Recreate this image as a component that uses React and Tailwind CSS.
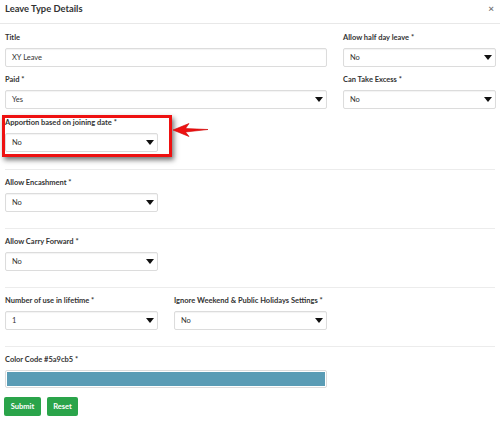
import React from 'react';

const font = { fontFamily: 'Lato, "Open Sans", Arial, sans-serif' };

function Label({ children }) {
  return (
    <div className="h-[12px] mb-[4px] text-[7.5px] leading-[12px] font-bold text-[#333] whitespace-nowrap">
      {children}
    </div>
  );
}

function TextInput({ value }) {
  return (
    <div className="h-[19px] border border-[#dcdcdc] rounded-[2px] bg-white flex items-center px-[6px] text-[7.5px] text-[#333] shadow-[inset_0_1px_1px_rgba(0,0,0,0.05)]">
      {value}
    </div>
  );
}

function Select({ value }) {
  return (
    <div className="h-[19px] border border-[#dcdcdc] rounded-[2px] bg-white flex items-center justify-between pl-[6px] pr-[3px] text-[7.5px] text-[#333] shadow-[inset_0_1px_1px_rgba(0,0,0,0.05)]">
      <span>{value}</span>
      <svg width="8" height="5" viewBox="0 0 8 5" className="mb-[1px]">
        <polygon points="0,0 8,0 4,5" fill="#111" />
      </svg>
    </div>
  );
}

function Field({ label, children, className = '' }) {
  return (
    <div className={className}>
      <Label>{label}</Label>
      {children}
    </div>
  );
}

function Section({ children }) {
  return (
    <div className="border-t border-[#ececec] pt-[7px] pb-[16px]">
      <div className="grid grid-cols-[153px_153px_153px] gap-x-[16px]">{children}</div>
    </div>
  );
}

export default function App() {
  return (
    <div className="relative w-[500px] h-[423px] bg-white overflow-hidden text-[#333]" style={font}>
      {/* header */}
      <div className="h-[24px] border-b border-[#e8e8e8] flex items-start justify-between pl-[5px] pr-[6px] pt-[2px]">
        <h1 className="text-[9.4px] leading-[14px] font-bold text-[#333]">Leave Type Details</h1>
        <span className="text-[10px] leading-[10px] font-bold text-[#777] mt-[1px]">×</span>
      </div>

      <div className="px-[5px]">
        {/* top part */}
        <div className="pt-[8px] pb-[17px] grid grid-cols-[153px_153px_153px] gap-x-[16px] gap-y-[7px]">
          <Field label="Title" className="col-span-2">
            <TextInput value="XY Leave" />
          </Field>
          <Field label="Allow half day leave *">
            <Select value="No" />
          </Field>
          <Field label="Paid *" className="col-span-2">
            <Select value="Yes" />
          </Field>
          <Field label="Can Take Excess *">
            <Select value="No" />
          </Field>
          <Field label="Apportion based on joining date *" className="mt-[1px]">
            <Select value="No" />
          </Field>
        </div>

        <Section>
          <Field label="Allow Encashment *">
            <Select value="No" />
          </Field>
        </Section>

        <Section>
          <Field label="Allow Carry Forward *">
            <Select value="No" />
          </Field>
        </Section>

        <Section>
          <Field label="Number of use in lifetime *">
            <Select value="1" />
          </Field>
          <Field label="Ignore Weekend & Public Holidays Settings *">
            <Select value="No" />
          </Field>
        </Section>

        <div className="border-t border-[#ececec] pt-[7px]">
          <div className="w-[322px]">
            <Label>Color Code #5a9cb5 *</Label>
            <div className="h-[18px] border border-[#dcdcdc] rounded-[2px] bg-white p-[1px]">
              <div className="h-full bg-[#5a9cb5]" />
            </div>
          </div>
          <div className="flex gap-[6px] mt-[9px] -ml-[1px]">
            <button className="h-[19px] w-[37px] rounded-[2px] bg-[#2aa44a] text-white text-[7.5px] font-bold">Submit</button>
            <button className="h-[19px] w-[31px] rounded-[2px] bg-[#2aa44a] text-white text-[7.5px] font-bold">Reset</button>
          </div>
        </div>
      </div>

      {/* annotation overlay */}
      <div className="absolute left-[2px] top-[115px] w-[170px] h-[42px] border-[3px] border-[#ee1111] shadow-[2px_3px_5px_rgba(0,0,0,0.55)] pointer-events-none" />
      <svg className="absolute left-[172px] top-[122px]" width="38" height="16" viewBox="0 0 38 16">
        <polygon points="1,8 17,1.5 13.5,6.5 36,7.5 13.5,10 17,14.5" fill="#ee1111" stroke="#cc0000" strokeWidth="0.6" strokeLinejoin="round" />
      </svg>
    </div>
  );
}
